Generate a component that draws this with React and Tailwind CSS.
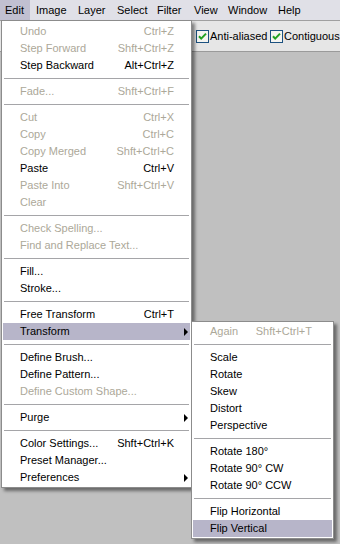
const font = { fontFamily: '"Liberation Sans", Arial, sans-serif' };

const barItems = [
  { label: 'Edit', w: 'w-[30px]', pl: 'pl-[5px]', active: true },
  { label: 'Image', w: 'w-[42px]', pl: 'pl-[6px]' },
  { label: 'Layer', w: 'w-[39px]', pl: 'pl-[6px]' },
  { label: 'Select', w: 'w-[40px]', pl: 'pl-[6px]' },
  { label: 'Filter', w: 'w-[37px]', pl: 'pl-[6px]' },
  { label: 'View', w: 'w-[34px]', pl: 'pl-[6px]' },
  { label: 'Window', w: 'w-[50px]', pl: 'pl-[6px]' },
  { label: 'Help', w: 'w-[28px]', pl: 'pl-[6px]' },
];

const editMenu = [
  { label: 'Undo', key: 'Ctrl+Z', off: true },
  { label: 'Step Forward', key: 'Shft+Ctrl+Z', off: true },
  { label: 'Step Backward', key: 'Alt+Ctrl+Z' },
  'sep',
  { label: 'Fade...', key: 'Shft+Ctrl+F', off: true },
  'sep',
  { label: 'Cut', key: 'Ctrl+X', off: true },
  { label: 'Copy', key: 'Ctrl+C', off: true },
  { label: 'Copy Merged', key: 'Shft+Ctrl+C', off: true },
  { label: 'Paste', key: 'Ctrl+V' },
  { label: 'Paste Into', key: 'Shft+Ctrl+V', off: true },
  { label: 'Clear', off: true },
  'sep',
  { label: 'Check Spelling...', off: true },
  { label: 'Find and Replace Text...', off: true },
  'sep',
  { label: 'Fill...' },
  { label: 'Stroke...' },
  'sep',
  { label: 'Free Transform', key: 'Ctrl+T' },
  { label: 'Transform', sub: true, hot: true },
  'sep',
  { label: 'Define Brush...' },
  { label: 'Define Pattern...' },
  { label: 'Define Custom Shape...', off: true },
  'sep',
  { label: 'Purge', sub: true },
  'sep',
  { label: 'Color Settings...', key: 'Shft+Ctrl+K' },
  { label: 'Preset Manager...' },
  { label: 'Preferences', sub: true },
];

const transformMenu = [
  { label: 'Again', key: 'Shft+Ctrl+T', off: true },
  'sep',
  { label: 'Scale' },
  { label: 'Rotate' },
  { label: 'Skew' },
  { label: 'Distort' },
  { label: 'Perspective' },
  'sep',
  { label: 'Rotate 180°' },
  { label: 'Rotate 90° CW' },
  { label: 'Rotate 90° CCW' },
  'sep',
  { label: 'Flip Horizontal' },
  { label: 'Flip Vertical', hot: true },
];

function Check() {
  return (
    <svg width="13" height="13" viewBox="0 0 13 13" className="shrink-0">
      <rect x="0.5" y="0.5" width="12" height="12" fill="#f4f4f0" stroke="#1c5180" />
      <path d="M3 6.2 L5.2 8.6 L10 3.6" fill="none" stroke="#21a121" strokeWidth="2" />
    </svg>
  );
}

function MenuList({ items, keyPr }) {
  return items.map((it, i) =>
    it === 'sep' ? (
      <div key={i} className="h-[9px] flex items-center px-[1px]">
        <div className="h-px w-full bg-[#a5a5a8]" />
      </div>
    ) : (
      <div
        key={i}
        className={`relative h-[17px] flex items-center justify-between whitespace-nowrap pl-[17px] ${keyPr} ${
          it.hot ? 'bg-[#b7b5c9]' : ''
        } ${it.off ? 'text-[#aca899]' : 'text-black'}`}
      >
        <span>{it.label}</span>
        {it.key && <span>{it.key}</span>}
        {it.sub && (
          <span className="absolute right-[2px] top-[5px] w-0 h-0 border-y-[4px] border-y-transparent border-l-[4px] border-l-black" />
        )}
      </div>
    )
  );
}

export default function App() {
  return (
    <div className="relative w-[340px] h-[544px] overflow-hidden bg-[#c0c0c0] text-[11px] leading-none" style={font}>
      {/* menu bar */}
      <div className="flex h-[20px] bg-[#e0e0e7]">
        {barItems.map((b) => (
          <div
            key={b.label}
            className={`${b.w} ${b.pl} flex items-center whitespace-nowrap text-black ${b.active ? 'bg-[#c1c0d1]' : ''}`}
          >
            {b.label}
          </div>
        ))}
      </div>

      {/* options bar */}
      <div className="h-[32px] bg-[#e6e6e6] border-t border-[#a0a0a0] border-b border-b-[#9a9a9a] flex items-center whitespace-nowrap">
        <div className="w-[196px] shrink-0" />
        <Check />
        <span className="w-[61px] shrink-0 pl-[1px] text-black">Anti-aliased</span>
        <Check />
        <span className="pl-[1px] text-black">Contiguous</span>
      </div>

      {/* Edit menu */}
      <div className="absolute left-[1px] top-[20px] w-[191px] bg-white border border-[#8c8c8c] pt-[2px] pb-[1px] px-[1px] shadow-[3px_3px_3px_rgba(0,0,0,0.45)]">
        <MenuList items={editMenu} keyPr="pr-[16px]" />
      </div>

      {/* Transform submenu */}
      <div className="absolute left-[191px] top-[321px] w-[143px] bg-white border border-[#8c8c8c] pt-[1px] pb-[1px] px-[1px] shadow-[3px_3px_3px_rgba(0,0,0,0.45)]">
        <MenuList items={transformMenu} keyPr="pr-[20px]" />
      </div>
    </div>
  );
}
